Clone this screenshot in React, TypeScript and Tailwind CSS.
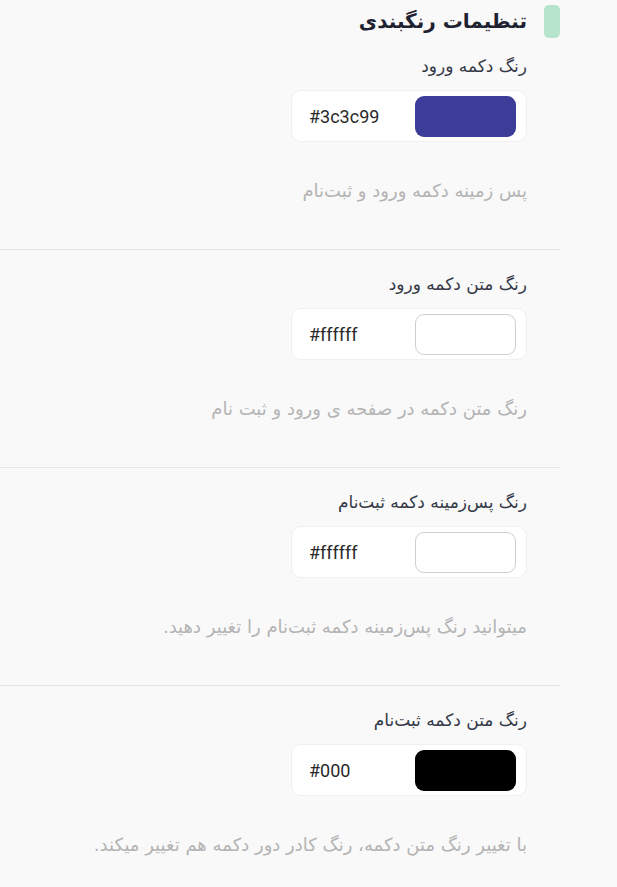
import React from "react";

const sections = [
  { label: "رنگ دکمه ورود", value: "#3c3c99", swatch: "bg-[#3c3c99]", desc: "پس زمینه دکمه ورود و ثبت‌نام" },
  { label: "رنگ متن دکمه ورود", value: "#ffffff", swatch: "bg-white border border-[#cfcfcf]", desc: "رنگ متن دکمه در صفحه ی ورود و ثبت نام" },
  { label: "رنگ پس‌زمینه دکمه ثبت‌نام", value: "#ffffff", swatch: "bg-white border border-[#cfcfcf]", desc: "میتوانید رنگ پس‌زمینه دکمه ثبت‌نام را تغییر دهید." },
  { label: "رنگ متن دکمه ثبت‌نام", value: "#000", swatch: "bg-black", desc: "با تغییر رنگ متن دکمه، رنگ کادر دور دکمه هم تغییر میکند." },
];

const font = { fontFamily: '"DejaVu Sans", sans-serif' };

function ColorField({ label, value, swatch, desc, first, last }: { label: string; value: string; swatch: string; desc: string; first: boolean; last: boolean }) {
  return (
    <div className={`pr-[33px] ${first ? "pt-[16px]" : "pt-[24px]"} ${last ? "pb-[34px]" : "pb-[48px] border-b border-[#e6e6e6]"}`}>
      <div className="text-[17px] leading-[20px] text-[#343846]">{label}</div>
      <div className="mt-[14px] w-[236px] h-[52px] bg-white rounded-[10px] border border-[#f0f0f0] flex items-center justify-between pr-[10px] pl-[17px]">
        <div className={`w-[101px] h-[41px] rounded-[9px] ${swatch}`} />
        <span dir="ltr" className="text-[18px] text-[#2a2a2a]" style={{ fontFamily: "Roboto, sans-serif" }}>{value}</span>
      </div>
      <div className="mt-[39px] text-[18px] leading-[20px] text-[#b4b4b4]">{desc}</div>
    </div>
  );
}

export default function App() {
  return (
    <div dir="rtl" className="min-h-[887px] w-[617px] bg-[#f9f9f9]" style={font}>
      <div className="w-[560px] mr-auto">
        <div className="flex items-center gap-[17px] h-[40px] pt-[2px]">
          <div className="w-[16px] h-[33px] rounded-[5px] bg-[#b7e5cc]" />
          <h2 className="text-[20px] font-bold text-[#1f2230] leading-none">تنظیمات رنگبندی</h2>
        </div>
        {sections.map((s, i) => (
          <ColorField key={s.label} {...s} first={i === 0} last={i === sections.length - 1} />
        ))}
      </div>
    </div>
  );
}
